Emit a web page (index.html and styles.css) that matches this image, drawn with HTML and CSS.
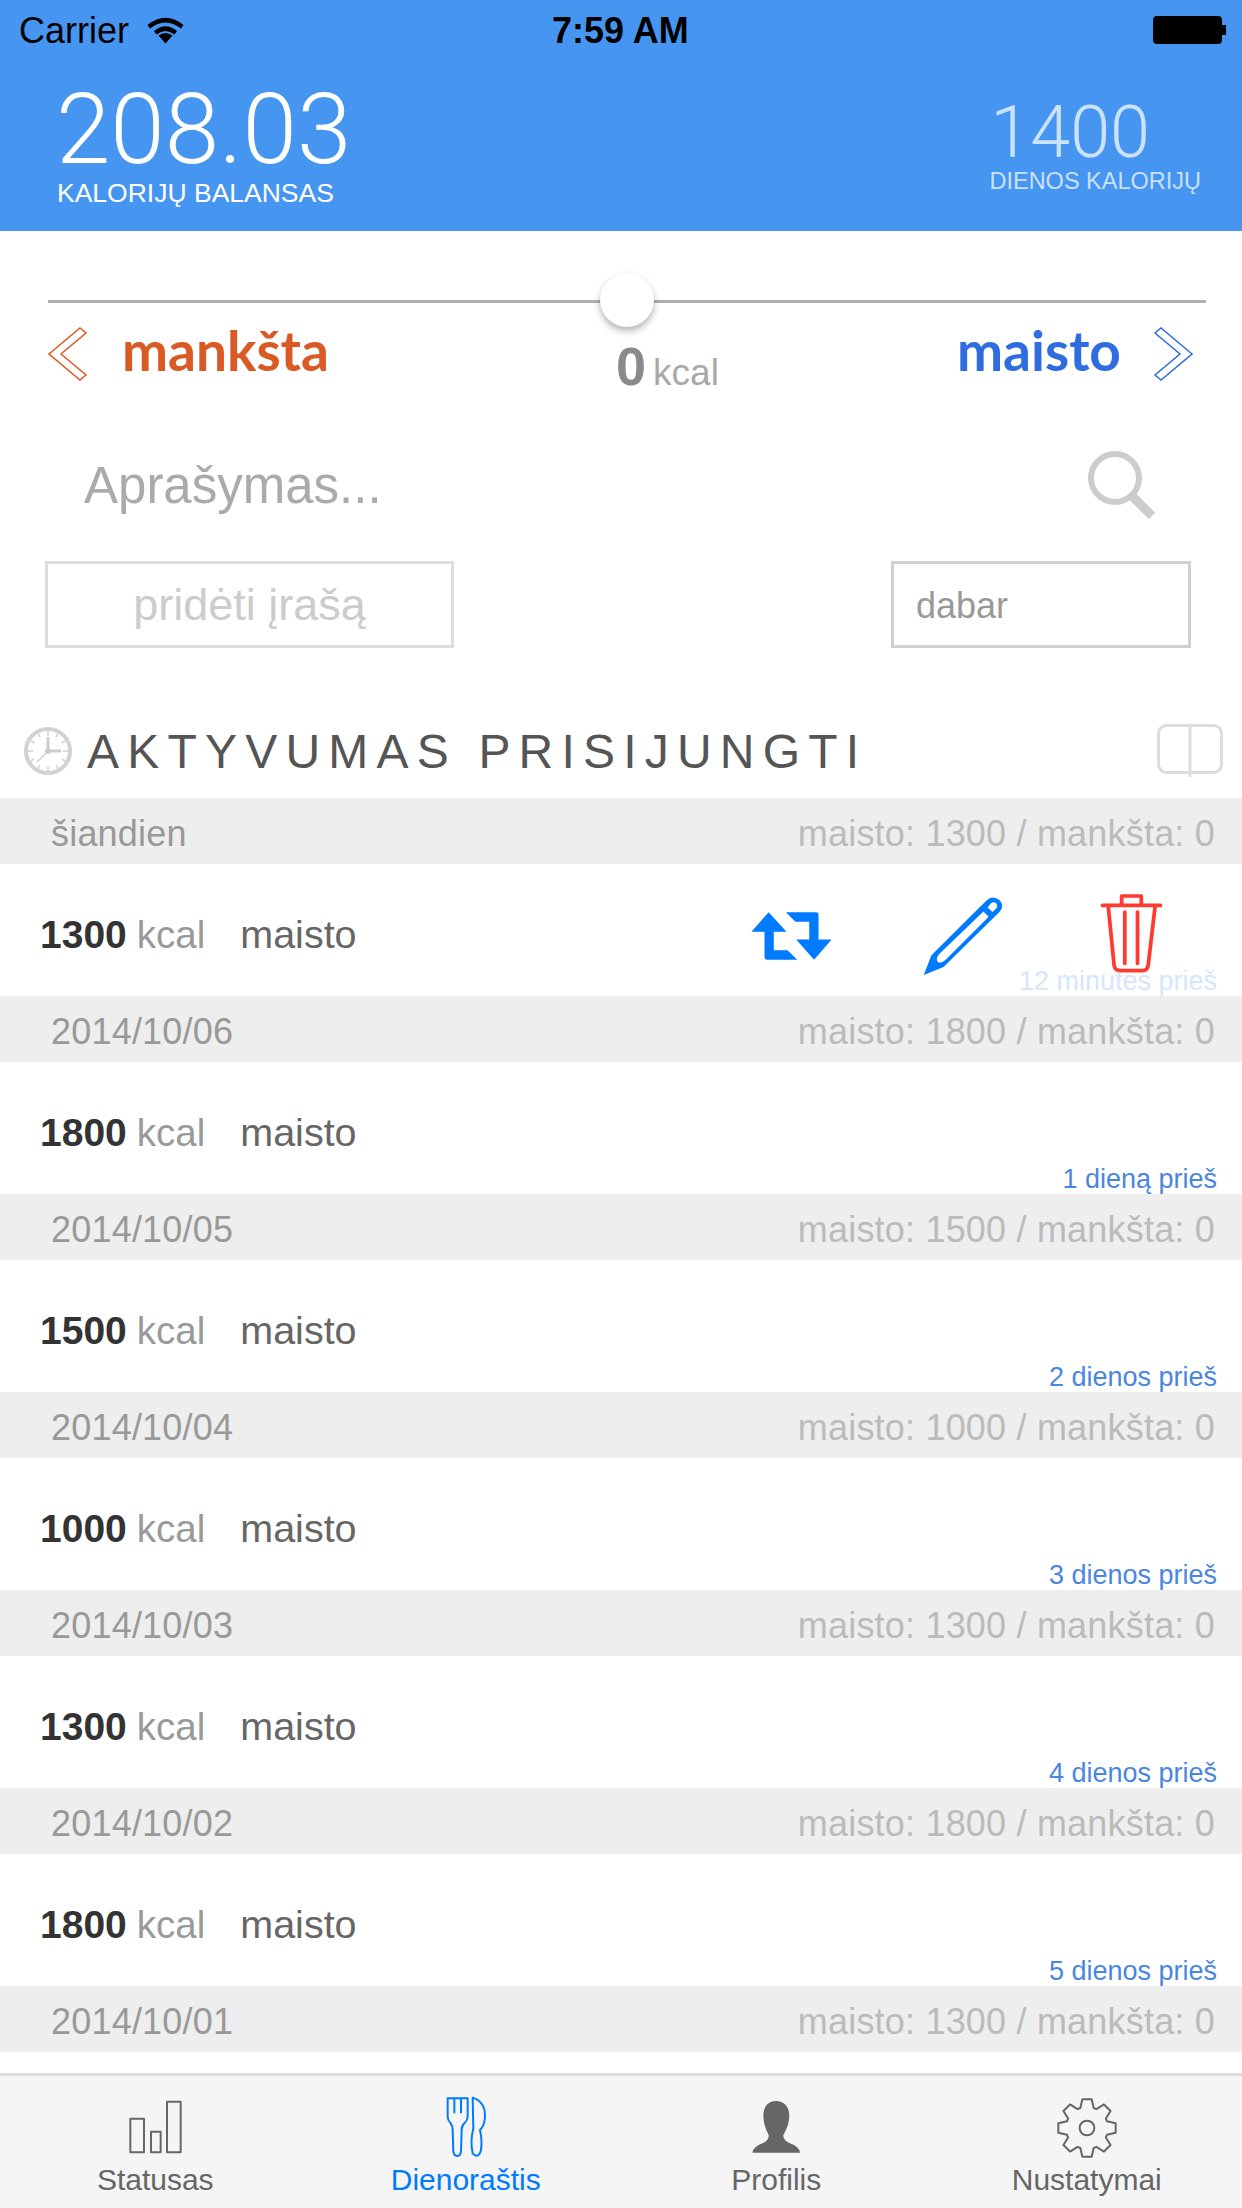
FILE: index.html
```html
<!DOCTYPE html>
<html lang="lt">
<head>
    <meta charset="UTF-8">
    <meta name="viewport" content="width=device-width, initial-scale=1.0">
    <title>Dienoraštis</title>
    <link rel="stylesheet" href="styles.css">
</head>
<body>
    <div class="app">
        <header class="top">
            <div class="status-bar">
                <div class="status-left">
                    <span class="status-text">Carrier</span>
                    <svg class="wifi" viewBox="0 0 37 28"><path d="M18.500 27.500L11.500 19.500Q18.500 14.500 25.500 19.500Z"/><path d="M7 15Q18.500 5.500 30 15L27.500 18.500Q18.500 11.500 9.500 18.500Z"/><path d="M0.500 9Q18.500-5.500 36.500 9L34 12.500Q18.500 0.500 3 12.500Z"/></svg>
                </div>
                <span class="clock-time status-text">7:59 AM</span>
                <div class="battery"><div class="battery-fill"></div></div>
            </div>
            <div class="summary">
                <div class="balance">
                    <div class="balance-value">208.03</div>
                    <div class="balance-label">KALORIJŲ BALANSAS</div>
                </div>
                <div class="daily">
                    <div class="daily-value">1400</div>
                    <div class="daily-label">DIENOS KALORIJŲ</div>
                </div>
            </div>
        </header>

        <main class="content">
            <div class="slider"><div class="slider-thumb"></div></div>

            <div class="direction">
                <div class="direction-side side-exercise">
                    <svg class="chevron" viewBox="0 0 40 54"><path d="M1 27L32 1L38 6L13 27L38 48L32 53Z"/></svg>
                    <span>mankšta</span>
                </div>
                <div class="amount"><b>0</b>kcal</div>
                <div class="direction-side side-food">
                    <span>maisto</span>
                    <svg class="chevron" viewBox="0 0 40 54"><path d="M39 27L8 1L2 6L27 27L2 48L8 53Z"/></svg>
                </div>
            </div>

            <div class="search-row">
                <span class="search-text">Aprašymas...</span>
                <svg class="search-icon" viewBox="0 0 68 68"><circle cx="27" cy="27" r="24"/><path d="M45 46L64 65"/></svg>
            </div>

            <div class="form-row">
                <div class="add-btn">pridėti įrašą</div>
                <div class="when-btn">dabar</div>
            </div>

            <div class="activity-title">
                <svg class="clock-icon" viewBox="0 0 48 48">
                    <circle class="clock-ring" cx="24" cy="24" r="22"/>
                    <path class="clock-ticks" d="M24 4V9M24 39V44M4 24H9M39 24H44M14 6.700L16 10.200M34 6.700L32 10.200M6.700 14L10.200 16M41.300 14L37.800 16M6.700 34L10.200 32M41.300 34L37.800 32M14 41.300L16 37.800M34 41.300L32 37.800"/>
                    <path class="clock-hands" d="M24 10V24H37"/>
                    <path class="clock-second" d="M24 24L13 35"/>
                    <circle class="clock-pin" cx="24" cy="24" r="3"/>
                </svg>
                <h2>AKTYVUMAS PRISIJUNGTI</h2>
                <svg class="book-icon" viewBox="0 0 66 54"><rect x="1.500" y="1.500" width="63" height="47" rx="8"/><path d="M33 0V53"/></svg>
            </div>

            <div class="log">
                <section class="day">
                    <div class="day-head"><span>šiandien</span><span class="day-totals">maisto: 1300 / mankšta: 0</span></div>
                    <div class="entry">
                        <b>1300</b><span class="entry-unit">kcal</span><span class="entry-type">maisto</span>
                        <span class="entry-time time-faded">12 minutės prieš</span>
                        <div class="entry-actions">
                            <svg class="act-repeat" viewBox="140 120 250 155" preserveAspectRatio="none"><path d="M200 127L252 185H215V240H255L283 268H195Q188 268 188 261V185H150Z"/><path d="M250 127H338Q345 127 345 134V208H383L332 268L280 208H318V155H278Z"/></svg>
                            <svg class="act-edit" viewBox="640 75 245 245" preserveAspectRatio="none"><path fill-rule="evenodd" d="M648 314L670 255L828 92Q846 74 866 90Q882 108 866 126L705 290ZM820 124L692 252Q680 268 690 276Q700 280 712 268L835 140ZM832 112L846 126L858 114Q862 104 855 98Q848 94 842 100Z"/></svg>
                            <svg class="act-delete" viewBox="1150 65 195 245" preserveAspectRatio="none"><path d="M1163 105H1332M1219 100V77H1276V100M1180 110L1197 285Q1200 300 1215 300H1280Q1293 300 1296 285L1316 110M1228 125V278M1265 125V278"/></svg>
                        </div>
                    </div>
                </section>
                <section class="day">
                    <div class="day-head"><span>2014/10/06</span><span class="day-totals">maisto: 1800 / mankšta: 0</span></div>
                    <div class="entry"><b>1800</b><span class="entry-unit">kcal</span><span class="entry-type">maisto</span><span class="entry-time">1 dieną prieš</span></div>
                </section>
                <section class="day">
                    <div class="day-head"><span>2014/10/05</span><span class="day-totals">maisto: 1500 / mankšta: 0</span></div>
                    <div class="entry"><b>1500</b><span class="entry-unit">kcal</span><span class="entry-type">maisto</span><span class="entry-time">2 dienos prieš</span></div>
                </section>
                <section class="day">
                    <div class="day-head"><span>2014/10/04</span><span class="day-totals">maisto: 1000 / mankšta: 0</span></div>
                    <div class="entry"><b>1000</b><span class="entry-unit">kcal</span><span class="entry-type">maisto</span><span class="entry-time">3 dienos prieš</span></div>
                </section>
                <section class="day">
                    <div class="day-head"><span>2014/10/03</span><span class="day-totals">maisto: 1300 / mankšta: 0</span></div>
                    <div class="entry"><b>1300</b><span class="entry-unit">kcal</span><span class="entry-type">maisto</span><span class="entry-time">4 dienos prieš</span></div>
                </section>
                <section class="day">
                    <div class="day-head"><span>2014/10/02</span><span class="day-totals">maisto: 1800 / mankšta: 0</span></div>
                    <div class="entry"><b>1800</b><span class="entry-unit">kcal</span><span class="entry-type">maisto</span><span class="entry-time">5 dienos prieš</span></div>
                </section>
                <section class="day">
                    <div class="day-head"><span>2014/10/01</span><span class="day-totals">maisto: 1300 / mankšta: 0</span></div>
                </section>
            </div>
        </main>

        <nav class="tabs">
            <div class="tab">
                <svg class="tab-icon" viewBox="69 33 192 192"><path class="tab-line" d="M91 101H132V202H91ZM153 140H182V202H153ZM201 50H242V202H201Z"/></svg>
                <span>Statusas</span>
            </div>
            <div class="tab tab-active">
                <svg class="tab-icon" viewBox="1002 33 192 192"><path class="tab-line" d="M1043 40H1103V95Q1103 105 1093 115Q1085 122 1085 135L1083 200Q1080 213 1072 213Q1062 213 1060 200L1058 135Q1058 122 1052 115Q1043 105 1043 95ZM1063 40V85M1083 40V85M1118 38Q1155 50 1155 92Q1155 120 1140 135Q1148 170 1142 200Q1132 222 1118 205Q1110 170 1120 130Z"/></svg>
                <span>Dienoraštis</span>
            </div>
            <div class="tab">
                <svg class="tab-icon" viewBox="132 33 192 192"><path class="tab-solid" d="M228 48Q265 50 268 90Q268 120 250 150Q248 165 270 175Q298 185 300 203H157Q160 185 188 175Q208 165 206 150Q190 120 190 90Q192 50 228 48Z"/></svg>
                <span>Profilis</span>
            </div>
            <div class="tab">
                <svg class="tab-icon" viewBox="-96 -96 192 192"><path class="tab-line" d="M-20-60L-14-86H14L20-60L28.300-56.600L50.900-70.700L70.700-50.900L56.600-28.300L60-20L86-14V14L60 20L56.600 28.300L70.700 50.900L50.900 70.700L28.300 56.600L20 60L14 86H-14L-20 60L-28.300 56.600L-50.900 70.700L-70.700 50.900L-56.600 28.300L-60 20L-86 14V-14L-60-20L-56.600-28.300L-70.700-50.900L-50.900-70.700L-28.300-56.600Z"/><circle class="tab-line" r="22"/></svg>
                <span>Nustatymai</span>
            </div>
        </nav>
    </div>
</body>
</html>
```

FILE: styles.css
```css
* {
    box-sizing: border-box;
}

body {
    margin: 0;
    background-color: #fff;
    font-family: 'Liberation Sans', Arial, sans-serif;
}

.app {
    width: 1242px;
    height: 2208px;
    display: flex;
    flex-direction: column;
    overflow: hidden;
}

/* top header */
.top {
    height: 231px;
    background-color: #4696f1;
    color: #fff;
}

.status-bar {
    height: 60px;
    padding: 0 16px 0 19px;
    display: flex;
    align-items: center;
    justify-content: space-between;
    position: relative;
    font-size: 36px;
    color: #000;
}

.status-text {
    padding-top: 2px;
}

.status-left {
    display: flex;
    align-items: center;
    gap: 18px;
}

.wifi {
    width: 37px;
    height: 28px;
}

.clock-time {
    position: absolute;
    left: 552px;
    font-weight: bold;
}

.battery {
    width: 73px;
    height: 28px;
    padding-right: 4px;
    position: relative;
}

.battery-fill {
    height: 100%;
    background-color: #000;
    border-radius: 4px;
}

.battery::after {
    content: '';
    position: absolute;
    right: 0;
    top: 9px;
    width: 4px;
    height: 10px;
    background-color: #000;
}

.summary {
    height: 171px;
    padding: 0 41px 0 56px;
    display: flex;
    justify-content: space-between;
}

.balance-value {
    font-family: Roboto, 'Liberation Sans', sans-serif;
    font-weight: 300;
    font-size: 98px;
    line-height: 98px;
    margin-top: 21px;
}

.balance-label {
    font-size: 26.500px;
    line-height: 30px;
    margin: -1px 0 0 1px;
}

.daily {
    padding-top: 37px;
    text-align: right;
    color: rgba(255, 255, 255, 0.72);
}

.daily-value {
    font-family: Roboto, 'Liberation Sans', sans-serif;
    font-weight: 300;
    font-size: 72px;
    line-height: 72px;
    padding-right: 51px;
}

.daily-label {
    font-size: 23.500px;
    line-height: 28px;
    margin-top: -2px;
}

/* main content */
.content {
    flex: 1;
    overflow: hidden;
}

.slider {
    height: 3px;
    margin: 69px 36px 0 48px;
    background-color: #b0b0b0;
    position: relative;
}

.slider-thumb {
    position: absolute;
    left: 552px;
    top: -27px;
    width: 54px;
    height: 54px;
    border-radius: 50%;
    background-color: #fff;
    box-shadow: 0 4px 7px rgba(0, 0, 0, 0.3);
}

.direction {
    height: 60px;
    margin-top: 24px;
    padding: 0 49px 0 48px;
    display: flex;
    justify-content: space-between;
}

.direction-side {
    display: flex;
    align-items: flex-start;
    font-family: Lato, 'Liberation Sans', sans-serif;
    font-weight: 700;
    font-size: 55px;
    line-height: 46px;
    gap: 34px;
}

.chevron {
    width: 40px;
    height: 54px;
    fill: none;
    stroke: currentColor;
    stroke-width: 1.500;
}

.side-exercise {
    color: #d95a24;
}

.side-food {
    gap: 32px;
    color: #2f6cdf;
}

.amount {
    margin: 14px 0 0 49px;
    font-size: 37px;
    line-height: 50px;
    color: #a8a8a8;
}

.amount b {
    margin-right: 7px;
    font-size: 54px;
    color: #8a8a8a;
}

.search-row {
    height: 80px;
    margin-top: 58px;
    padding: 0 86px 0 84px;
    display: flex;
    align-items: center;
    justify-content: space-between;
}

.search-text {
    font-size: 51px;
    color: #aaa;
}

.search-icon {
    width: 68px;
    height: 68px;
    fill: none;
    stroke: #ccc;
    stroke-width: 6;
}

.search-icon path {
    stroke-width: 9;
}

.form-row {
    margin: 36px 51px 0 45px;
    display: flex;
    justify-content: space-between;
}

.add-btn,
.when-btn {
    height: 87px;
    display: flex;
    align-items: center;
}

.add-btn {
    width: 409px;
    justify-content: center;
    border: 3px solid #ddd;
    font-size: 45px;
    color: #ccc;
}

.when-btn {
    width: 300px;
    padding: 2px 0 0 22px;
    border: 3px solid #d0d0d0;
    font-size: 36px;
    color: #999;
}

.activity-title {
    height: 80px;
    margin: 63px 0 7px;
    padding: 0 19px 0 24px;
    display: flex;
    align-items: center;
}

.activity-title h2 {
    flex: 1;
    margin: 0 0 0 15px;
    font-size: 48px;
    font-weight: normal;
    letter-spacing: 8.200px;
    color: #555;
}

.clock-icon {
    width: 48px;
    height: 48px;
}

.clock-ring {
    fill: none;
    stroke: #d2d2d2;
    stroke-width: 4;
}

.clock-ticks,
.clock-second {
    fill: none;
    stroke: #d2d2d2;
    stroke-width: 1.500;
}

.clock-hands {
    fill: none;
    stroke: #ccc;
    stroke-width: 3;
}

.clock-pin {
    fill: #ccc;
}

.book-icon {
    width: 66px;
    height: 54px;
    fill: none;
    stroke: #ddd;
    stroke-width: 3;
}

/* activity log */
.day-head {
    height: 66px;
    padding: 5px 27px 0 51px;
    display: flex;
    align-items: center;
    justify-content: space-between;
    background-color: #eee;
    font-size: 36px;
    letter-spacing: 0.200px;
    color: #999;
}

.day-totals {
    color: #bbb;
}

.entry {
    height: 132px;
    padding: 9px 25px 0 40px;
    display: flex;
    align-items: center;
    position: relative;
    font-size: 39.500px;
}

.entry b {
    font-size: 39px;
    color: #333;
}

.entry-unit {
    margin-left: 10px;
    font-size: 38.500px;
    color: #999;
}

.entry-type {
    margin-left: 35px;
    color: #666;
}

.entry-time {
    margin-left: auto;
    align-self: flex-end;
    font-size: 27px;
    line-height: 30px;
    color: #4a86e0;
}

.time-faded {
    color: #d6e6fb;
}

.entry-actions {
    position: absolute;
    left: 748px;
    top: 31px;
    display: flex;
    align-items: center;
}

.act-repeat {
    width: 86px;
    height: 52px;
    fill: #007aff;
}

.act-edit {
    width: 85px;
    height: 82px;
    margin-left: 87px;
    fill: #007aff;
}

.act-delete {
    width: 67px;
    height: 82px;
    margin: -7px 0 0 92px;
    fill: none;
    stroke: #ff3b30;
    stroke-width: 11;
    stroke-linecap: round;
    stroke-linejoin: round;
}

/* tab bar */
.tabs {
    height: 135px;
    border-top: 3px solid #ddd;
    background-color: #f5f5f5;
    display: grid;
    grid-template-columns: repeat(4, 1fr);
    color: #666;
    font-size: 30px;
}

.tab {
    display: flex;
    flex-direction: column;
    align-items: center;
    padding-top: 20px;
    line-height: 34px;
}

.tab-icon {
    width: 64px;
    height: 64px;
    margin-bottom: 3px;
}

.tab-line {
    fill: none;
    stroke: currentColor;
    stroke-width: 6;
    stroke-linejoin: round;
}

.tab-solid {
    fill: currentColor;
}

.tab-active {
    color: #007aff;
}
```
